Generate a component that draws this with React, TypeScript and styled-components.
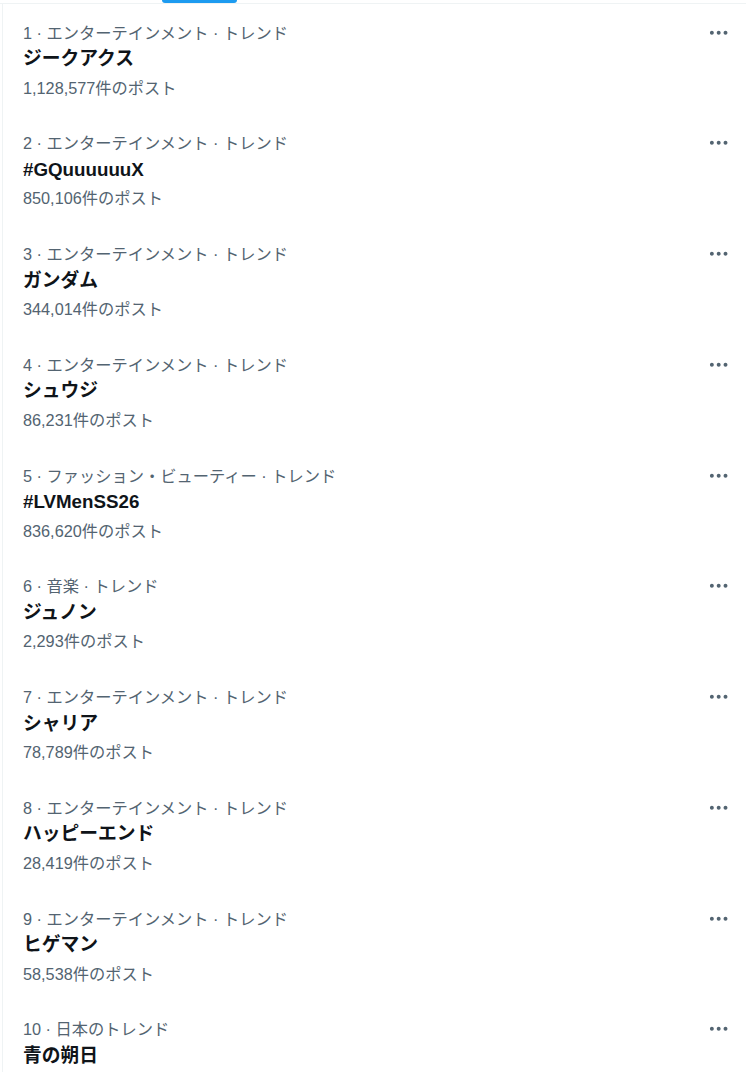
import React from "react";
import styled, { createGlobalStyle } from "styled-components";

const GlobalStyle = createGlobalStyle`
  html, body {
    margin: 0;
    padding: 0;
    background: #ffffff;
  }
  body {
    font-family: "Liberation Sans", "Noto Sans CJK JP", sans-serif;
    color: #0f1419;
  }
`;

const Page = styled.div`
  width: 746px;
  overflow: hidden;
`;

const TabBar = styled.div`
  display: flex;
  height: 3px;
  border-bottom: 1px solid #eff3f4;
`;

const Tab = styled.div<{ $width: number }>`
  width: ${(p) => p.$width}px;
  display: flex;
  justify-content: center;
`;

const Indicator = styled.div`
  width: 100%;
  height: 3px;
  background: #1d9bf0;
  border-radius: 0 0 9999px 9999px;
`;

const TrendList = styled.div`
  margin-left: 2px;
  border-left: 1px solid #eff3f4;
  display: flex;
  flex-direction: column;
`;

const TrendRow = styled.div`
  display: flex;
  align-items: flex-start;
  padding: 18.5px 15.5px 17.28px 20px;
`;

const TrendBody = styled.div`
  flex: 1;
  display: flex;
  flex-direction: column;
  min-width: 0;
`;

const Category = styled.div`
  font-size: 16.25px;
  line-height: 20px;
  color: #536471;
  white-space: nowrap;
`;

const Name = styled.div`
  font-size: 18.75px;
  line-height: 25px;
  font-weight: 700;
  color: #0f1419;
  margin-top: 3.5px;
`;

const Count = styled.div`
  font-size: 16.25px;
  line-height: 20px;
  color: #536471;
  margin-top: 6.5px;
`;

const MoreButton = styled.div`
  width: 23.4px;
  height: 23.4px;
  margin-top: -2px;
  color: #536471;
  flex-shrink: 0;

  svg {
    display: block;
    width: 100%;
    height: 100%;
  }
`;

interface Trend {
  category: string;
  name: string;
  count?: string;
}

const ENT = "エンターテインメント · トレンド";

const trends: Trend[] = [
  { category: ENT, name: "ジークアクス", count: "1,128,577件のポスト" },
  { category: ENT, name: "#GQuuuuuuX", count: "850,106件のポスト" },
  { category: ENT, name: "ガンダム", count: "344,014件のポスト" },
  { category: ENT, name: "シュウジ", count: "86,231件のポスト" },
  {
    category: "ファッション・ビューティー · トレンド",
    name: "#LVMenSS26",
    count: "836,620件のポスト",
  },
  { category: "音楽 · トレンド", name: "ジュノン", count: "2,293件のポスト" },
  { category: ENT, name: "シャリア", count: "78,789件のポスト" },
  { category: ENT, name: "ハッピーエンド", count: "28,419件のポスト" },
  { category: ENT, name: "ヒゲマン", count: "58,538件のポスト" },
  { category: "日本のトレンド", name: "青の朔日" },
];

const MoreIcon = () => (
  <svg viewBox="0 0 24 24" aria-hidden="true">
    <path
      fill="currentColor"
      d="M3 12c0-1.1.9-2 2-2s2 .9 2 2-.9 2-2 2-2-.9-2-2zm9 2c1.1 0 2-.9 2-2s-.9-2-2-2-2 .9-2 2 .9 2 2 2zm7 0c1.1 0 2-.9 2-2s-.9-2-2-2-2 .9-2 2 .9 2 2 2z"
    />
  </svg>
);

const App: React.FC = () => {
  return (
    <Page>
      <GlobalStyle />
      <TabBar>
        <Tab $width={162} />
        <Tab $width={75}>
          <Indicator />
        </Tab>
      </TabBar>
      <TrendList>
        {trends.map((trend, index) => (
          <TrendRow key={index}>
            <TrendBody>
              <Category>
                {index + 1} · {trend.category}
              </Category>
              <Name>{trend.name}</Name>
              {trend.count && <Count>{trend.count}</Count>}
            </TrendBody>
            <MoreButton>
              <MoreIcon />
            </MoreButton>
          </TrendRow>
        ))}
      </TrendList>
    </Page>
  );
};

export default App;
